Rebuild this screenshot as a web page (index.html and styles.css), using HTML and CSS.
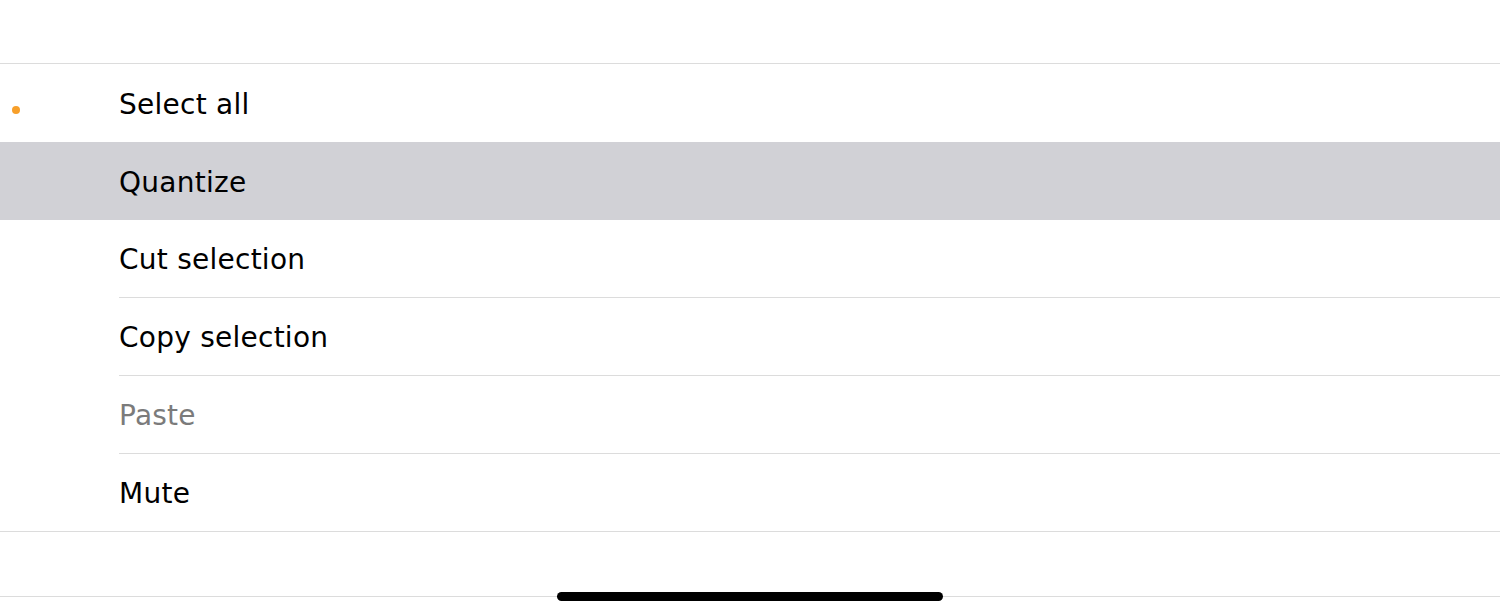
FILE: index.html
```html
<!DOCTYPE html>
<html>
<head>
<meta charset="utf-8">
<link rel="stylesheet" href="styles.css">
</head>
<body>
<div class="screen">
  <div class="header"></div>
  <ul class="menu">
    <li class="row">
      <div class="lead"><span class="dot"></span></div>
      <div class="label">Select all</div>
    </li>
    <li class="row selected">
      <div class="lead"></div>
      <div class="label">Quantize</div>
    </li>
    <li class="row inset">
      <div class="lead"></div>
      <div class="label">Cut selection</div>
    </li>
    <li class="row inset">
      <div class="lead"></div>
      <div class="label">Copy selection</div>
    </li>
    <li class="row inset">
      <div class="lead"></div>
      <div class="label disabled">Paste</div>
    </li>
    <li class="row last">
      <div class="lead"></div>
      <div class="label">Mute</div>
    </li>
  </ul>
  <div class="footer"></div>
  <div class="home-indicator"></div>
</div>
</body>
</html>
```

FILE: styles.css
```css
html, body {
  margin: 0;
  padding: 0;
  background: #ffffff;
}

.screen {
  position: relative;
  width: 1500px;
  height: 616px;
  overflow: hidden;
  font-family: "DejaVu Sans", "Liberation Sans", sans-serif;
  color: #000000;
}

.header {
  height: 63px;
  border-bottom: 1px solid #dcdcdc;
}

.menu {
  list-style: none;
  margin: 0;
  padding: 0;
}

.row {
  display: flex;
  height: 78px;
  box-sizing: border-box;
}

.row.selected {
  background: #d1d1d6;
}

.row.last {
  border-bottom: 1px solid #dcdcdc;
}

.lead {
  width: 119px;
  flex: none;
  display: flex;
  align-items: center;
}

.dot {
  width: 8px;
  height: 8px;
  border-radius: 50%;
  background: #f79f2a;
  margin-left: 12px;
  margin-top: 13px;
}

.label {
  flex: 1;
  display: flex;
  align-items: center;
  padding-top: 2px;
  font-size: 28px;
  letter-spacing: 0.25px;
  box-sizing: border-box;
}

.row.inset .label {
  border-bottom: 1px solid #dcdcdc;
}

.label.disabled {
  color: #7b7b7b;
}

.footer {
  height: 64px;
  border-bottom: 1px solid #dcdcdc;
}

.home-indicator {
  position: absolute;
  left: 557px;
  top: 592px;
  width: 386px;
  height: 9px;
  border-radius: 5px;
  background: #000000;
}
```
